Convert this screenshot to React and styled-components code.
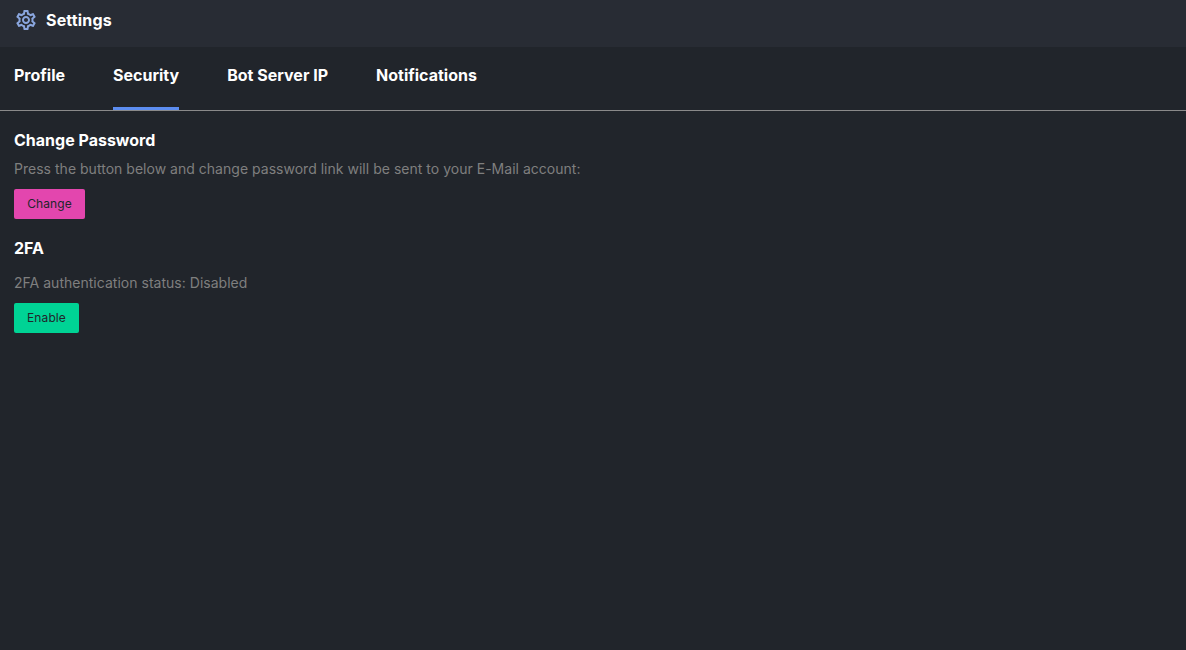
import React from "react";
import styled, { createGlobalStyle } from "styled-components";
import { MdOutlineSettings } from "react-icons/md";

const Global = createGlobalStyle`
  html, body { margin: 0; padding: 0; background: #21252b; }
  body { font-family: Inter, "Liberation Sans", sans-serif; }
`;
const Page = styled.div`
  width: 1186px; height: 650px; overflow: hidden;
  display: flex; flex-direction: column; background: #21252b;
`;
const Header = styled.header`
  height: 47px; flex: none; box-sizing: border-box; background: #282c34;
  display: flex; align-items: center; gap: 8px; padding: 0 0 7px 14px;
`;
const SettingsIcon = styled(MdOutlineSettings)`
  width: 24px; height: 24px; flex: none; color: #8aa6de;
`;
const HeaderTitle = styled.h1`
  margin: 0; font-size: 16px; line-height: 20px; font-weight: 700; color: #fff; letter-spacing: 0.17px;
`;
const Tabs = styled.nav`
  height: 64px; flex: none; box-sizing: border-box; border-bottom: 1px solid #8a8a8a;
  display: flex; gap: 48px; padding: 0 14px;
`;
const Tab = styled.div`
  box-sizing: border-box; height: 63px; padding-top: 18px;
  font-size: 16px; line-height: 20px; font-weight: 700; color: #fff;
  border-bottom: 3px solid ${p => (p.$active ? "#5c8df0" : "transparent")};
`;
const Content = styled.main`
  display: flex; flex-direction: column; align-items: flex-start; padding: 19px 14px 0;
`;
const SectionTitle = styled.h2`
  margin: 0; font-size: 16px; line-height: 20px; font-weight: 700; color: #fff;
`;
const Description = styled.p`
  margin: ${p => p.$top}px 0 10px; font-size: 14px; line-height: 20px; font-weight: 400; color: #7f7f7f; letter-spacing: 0.02px;
`;
const Button = styled.button`
  width: ${p => p.$width}px; height: 30px; border: 0; border-radius: 2px; padding: 0 0 2px;
  background: ${p => p.$bg}; color: #21252b;
  font-family: inherit; font-size: 12px; font-weight: 400; letter-spacing: 0.1px;
  margin-bottom: ${p => p.$bottom || 0}px;
`;

export default function App() {
  return (
    <Page>
      <Global />
      <Header>
        <SettingsIcon />
        <HeaderTitle>Settings</HeaderTitle>
      </Header>
      <Tabs>
        <Tab>Profile</Tab>
        <Tab $active>Security</Tab>
        <Tab>Bot Server IP</Tab>
        <Tab>Notifications</Tab>
      </Tabs>
      <Content>
        <SectionTitle>Change Password</SectionTitle>
        <Description $top={9}>Press the button below and change password link will be sent to your E-Mail account:</Description>
        <Button $bg="#e346ae" $width={71} $bottom={19}>Change</Button>
        <SectionTitle>2FA</SectionTitle>
        <Description $top={15}>2FA authentication status: Disabled</Description>
        <Button $bg="#00d395" $width={65}>Enable</Button>
      </Content>
    </Page>
  );
}
